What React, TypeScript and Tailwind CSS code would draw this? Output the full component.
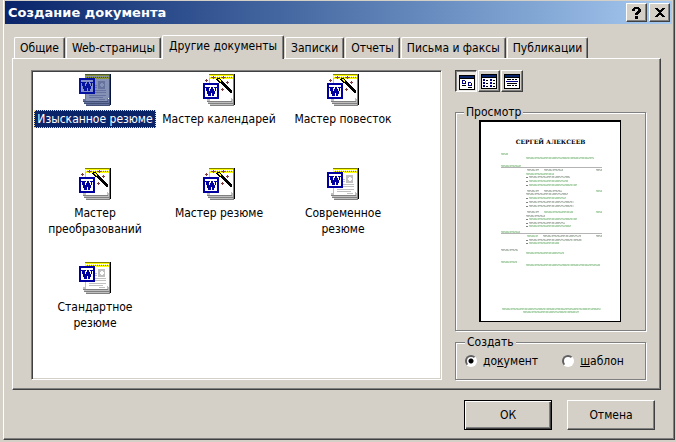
import React, { useState } from 'react';
import clsx from 'clsx';

type Kind = 'wizard' | 'template';

const TABS = [
  'Общие',
  'Web-страницы',
  'Другие документы',
  'Записки',
  'Отчеты',
  'Письма и факсы',
  'Публикации',
];

const ITEMS: { name: string; kind: Kind }[] = [
  { name: 'Изысканное резюме', kind: 'template' },
  { name: 'Мастер календарей', kind: 'wizard' },
  { name: 'Мастер повесток', kind: 'wizard' },
  { name: 'Мастер преобразований', kind: 'wizard' },
  { name: 'Мастер резюме', kind: 'wizard' },
  { name: 'Современное резюме', kind: 'template' },
  { name: 'Стандартное резюме', kind: 'template' },
];

// x, y, width, green
const PREVIEW_LINES: [number, number, number, boolean][] = [
  [20, 31, 7, true],
  [45, 35, 68, true],
  [20, 43, 20, true],
  [46, 47, 12, false], [63, 47, 19, false], [115, 47, 6, false],
  [45, 51, 28, true],
  [48, 54, 41, false],
  [48, 58, 39, true],
  [48, 62, 48, true],
  [46, 68, 12, false], [63, 68, 18, false], [115, 68, 6, true],
  [45, 71, 42, false],
  [48, 75, 37, true],
  [48, 79, 45, false],
  [48, 83, 45, false],
  [46, 89, 12, false], [63, 89, 29, true], [115, 89, 6, true],
  [45, 93, 19, false],
  [48, 96, 48, true],
  [48, 100, 36, false],
  [48, 103, 42, true],
  [20, 109, 19, true],
  [46, 113, 11, true], [62, 113, 38, false], [115, 113, 6, false],
  [48, 117, 53, false],
  [48, 120, 30, true],
  [20, 127, 17, false],
  [45, 130, 38, true],
  [20, 139, 16, true],
  [45, 142, 74, true],
  [21, 186, 99, true],
  [42, 189, 56, true],
];

function DocIcon({ kind, selected }: { kind: Kind; selected: boolean }) {
  const paper = selected ? '#8591b5' : '#ffffff';
  const shade = selected ? '#65739e' : '#c0c0c0';
  const edge = selected ? '#424f77' : '#808080';
  const band = selected ? '#858f35' : '#ffff00';
  const bandDark = selected ? '#485632' : '#808000';
  const dark = selected ? '#05123b' : '#000000';
  const blue = selected ? '#0512a0' : '#0000a0';
  const badge = selected ? '#8591cb' : '#ffffff';
  return (
    <svg width="32" height="32" viewBox="0 0 32 32" shapeRendering="crispEdges" aria-hidden="true">
      <path d="M4 25h27v7H7v-2H5v-2H4z" fill={shade} />
      <path d="M4 27.500h25M5 29.500h25M7 31.500h24" stroke={edge} fill="none" />
      <path d="M6 0h24v24h-2v3H6z" fill={paper} />
      <path d="M28.500 24v3M6.500 1v26" stroke={shade} fill="none" />
      <path d="M6 0h24v4H6z" fill={band} />
      <path d="M6 .5h24" stroke={bandDark} />
      <path d="M7 2.500h23" stroke={paper} strokeDasharray="1 1" />
      <path d="M8 3.500h22" stroke={bandDark} strokeDasharray="1 1" />
      <path d="M7 4.500h23" stroke={band} strokeDasharray="1 1" />
      <path d="M30.500 0v31" stroke={edge} />
      <path d="M31.500 0v31" stroke={dark} />
      {kind === 'template' && (
        <>
          <path d="M19 7h7v8h-7z" fill={shade} />
          <path d="M22 9h2v1h1v2h-1v1h-2v-1h-1v-2h1z" fill={paper} />
          <path d="M16 11.5h2M16 13.5h2M16 16.5h11M16 18.5h11M10 21.5h17M10 23.5h14M20 25.5h6" stroke={shade} />
        </>
      )}
      {kind === 'wizard' && (
        <>
          <path d="M10.500 2v3M9 3.500h3M20.500 2v3M19 3.500h3M3.500 5v3M2 6.500h3M24.500 7v3M23 8.500h3M19.500 14v3M18 15.500h3" stroke="#804040" fill="none" />
          <path d="M14 4h3v1h1v1h1v1h1v1h1v1h1v1h1v1h1v1h1v1h1v1h1v1h1v1h1v3h-2v-1h-1v-1h-1v-1h-1v-1h-1v-1h-1v-1h-1v-1h-1v-1h-1v-1h-1v-1h-1V9h-1V8h-1V7h-1V6h-1z" fill="#000" />
          <path d="M15 5h2v1h1v2h-1V7h-1V6h-1z" fill="#ffff00" />
        </>
      )}
      <svg y={kind === 'wizard' ? 9 : 4} width="16" height="16">
        <path d="M0 0h16v16H0z" fill={blue} />
        <path d="M2 2h12v12H2z" fill={badge} />
        <path d="M3 4h4v1H6v3h1V6h1V4h2v2h1v2h1V5h-1V4h3v1h-1v3h-1v3h-1v2H9v-3H8v3H5v-2H4V8H3V5H2V4z" fill={blue} />
      </svg>
    </svg>
  );
}

function ViewIcon({ view }: { view: number }) {
  return (
    <svg width="16" height="15" viewBox="0 0 16 15" shapeRendering="crispEdges" aria-hidden="true">
      <path d="M0 0h16v15H0z" fill="#000" />
      <path d="M1 4h14v10H1z" fill="#fff" />
      <path d="M1 1h14v2H1z" fill="#0a246a" />
      {view === 0 && (
        <g stroke="#000080" fill="none">
          <path d="M3.500 5.500h2l1 1v2h-3zM9.500 7.500h2l1 1v2h-3z" />
          <path d="M3 10.500h4M9 12.500h4" stroke="#000" />
        </g>
      )}
      {view === 1 && (
        <>
          <path d="M2 5h2v2H2zM2 8h2v2H2zM2 11h2v2H2zM9 5h2v2H9zM9 8h2v2H9zM9 11h2v2H9z" fill="#000080" />
          <path d="M5 6.500h2M5 9.500h2M5 12.500h2M12 6.500h2M12 9.500h2M12 12.500h2" stroke="#000" />
        </>
      )}
      {view === 2 && (
        <>
          <path d="M3 5.500h4M8 5.500h2M11 5.500h2M3 9.500h10M3 11.500h4M8 11.500h2M11 11.500h2" stroke="#000" />
          <path d="M2 7.500h12" stroke="#000080" />
        </>
      )}
    </svg>
  );
}

function Preview() {
  return (
    <div className="relative ml-[23px] h-[202px] w-[142px] border-2 border-r border-b border-black bg-white">
      <svg className="block h-full w-full" viewBox="0 0 139 199" shapeRendering="crispEdges" aria-hidden="true">
        <path d="M20 45.500h101M20 111.500h101" stroke="#b4b4b4" />
        {PREVIEW_LINES.map(([x, y, w, green], i) => (
          <g key={i}>
            <path d={`M${x} ${y + 1}h${w}`} stroke={green ? '#cfe8cf' : '#e0e4e0'} strokeWidth="2" />
            <path d={`M${x} ${y + 0.5}h${w}`} stroke={green ? '#b4d6b4' : '#b8b8b8'} strokeDasharray="4 1 2 2" />
            <path d={`M${x + 1} ${y + 1.5}h${w - 1}`} stroke={green ? '#b4d6b4' : '#bccabc'} strokeDasharray="2 1 4 1 1 2" />
          </g>
        ))}
        <path d="M45 55.500h2M45 59.500h2M45 63.500h2M45 76.500h2M45 80.500h2M45 84.500h2M45 97.500h2M45 101.500h2M45 104.500h2M45 118.500h2M45 121.500h2" stroke="#808080" />
      </svg>
      <p className="absolute inset-x-0 top-4 text-center font-['DejaVu_Serif',serif] text-[6px] leading-2 font-bold whitespace-nowrap">
        СЕРГЕЙ АЛЕКСЕЕВ
      </p>
    </div>
  );
}

const raised =
  'border border-t-white border-l-white border-r-[#404040] border-b-[#404040] bg-[#d4d0c8] shadow-[inset_-1px_-1px_0_#808080]';
const group =
  'min-w-0 border border-[#808080] shadow-[1px_1px_0_#fff,inset_1px_1px_0_#fff]';
const radio =
  "h-3 w-3 appearance-none rounded-full border-2 border-t-[#606060] border-l-[#606060] border-r-white border-b-white bg-white checked:bg-[radial-gradient(circle,#000_2px,#fff_3px)]";

export default function App() {
  const [tab, setTab] = useState(2);
  const [selected, setSelected] = useState(0);
  const [view, setView] = useState(0);
  const [target, setTarget] = useState('document');

  return (
    <div className="min-h-screen bg-[#d4d0c8] pr-px pb-px pl-[3px] font-['DejaVu_Sans_Condensed','DejaVu_Sans',sans-serif] text-[12px] leading-4 text-black">
      <div className="border-r border-b border-l border-l-white border-r-[#404040] border-b-[#404040] px-px pt-px pb-[9px] shadow-[inset_-1px_-1px_0_#808080]">
        <header className="mr-px flex h-[23px] items-center bg-linear-to-r from-[#0a246a] to-[#a6caf0] pr-0.5 pl-[3px]">
          <h1 className="flex-1 font-['DejaVu_Sans',sans-serif] text-[13px] font-bold text-white">Создание документа</h1>
          <button aria-label="Справка" className={clsx(raised, 'mr-0.5 flex h-[19px] w-[21px] items-center justify-center')}>
            <svg width="9" height="12" viewBox="0 0 9 12" shapeRendering="crispEdges" aria-hidden="true">
              <path d="M2 0h5v1h1v1h1v3H8v1H7v1H6v1H3V6h1V5h1V4h1V2H3v2H0V2h1V1h1zM3 9h3v3H3z" />
            </svg>
          </button>
          <button aria-label="Закрыть" className={clsx(raised, 'flex h-[19px] w-[21px] items-center justify-center')}>
            <svg width="10" height="9" viewBox="0 0 10 9" shapeRendering="crispEdges" aria-hidden="true">
              <path d="M0 0h3v1h1v1h2V1h1V0h3v1H9v1H8v1H7v1H6v1h1v1h1v1h1v1h1v1H7V8H6V7H4v1H3v1H0V8h1V7h1V6h1V5h1V4H3V3H2V2H1V1H0z" />
            </svg>
          </button>
        </header>

        <main className="mt-[11px] mr-3 ml-[7px]">
          <div role="tablist" className="flex h-[23px] items-end gap-px pl-0.5">
            {TABS.map((name, i) => (
              <button
                key={name}
                role="tab"
                aria-selected={tab === i}
                onClick={() => setTab(i)}
                className={clsx(
                  'rounded-t-[2px] border-t border-l border-r border-t-white border-l-white border-r-[#404040] bg-[#d4d0c8] whitespace-nowrap shadow-[inset_-1px_0_0_#808080]',
                  tab === i ? 'relative -mb-px h-6 px-1.5 pb-1' : 'h-[21px] px-[5px]',
                )}
              >
                {name}
              </button>
            ))}
          </div>

          <section className="flex gap-[13px] border-t border-r border-b border-l border-t-white border-l-white border-r-[#404040] border-b-[#404040] pt-[11px] pr-3.5 pb-[9px] pl-[18px] shadow-[inset_-1px_-1px_0_#808080]">
            <ul className="grid h-[310px] min-w-0 flex-1 auto-rows-[94px] grid-cols-[repeat(auto-fill,124px)] border border-t-[#808080] border-l-[#808080] border-r-white border-b-white bg-white pt-[3px] pl-px shadow-[inset_1px_1px_0_#404040,inset_-1px_-1px_0_#d4d0c8]">
              {ITEMS.map((item, i) => (
                <li key={item.name}>
                  <button className="flex w-full flex-col items-center" onClick={() => setSelected(i)}>
                    <DocIcon kind={item.kind} selected={selected === i} />
                    <span
                      className={clsx(
                        'mt-1 border border-dotted px-0.5',
                        selected === i ? 'border-[#f5db95] bg-[#0a246a] whitespace-nowrap text-white' : 'border-transparent',
                      )}
                    >
                      {item.name}
                    </span>
                  </button>
                </li>
              ))}
            </ul>

            <div className="flex w-[191px] flex-col">
              <div className="flex gap-px">
                {['Крупные значки', 'Список', 'Таблица'].map((label, i) => (
                  <button
                    key={label}
                    aria-label={label}
                    aria-pressed={view === i}
                    onClick={() => setView(i)}
                    className={clsx(
                      'flex h-[22px] w-[22px] items-center justify-center',
                      view === i
                        ? 'border border-t-[#404040] border-l-[#404040] border-r-white border-b-white bg-[#ebe8e3] pt-0.5 pl-0.5 shadow-[inset_1px_1px_0_#808080]'
                        : raised,
                    )}
                  >
                    <ViewIcon view={i} />
                  </button>
                ))}
              </div>

              <fieldset className={clsx(group, 'mt-3 pb-2')}>
                <legend className="relative z-10 ml-2 bg-[#d4d0c8] px-0.5">Просмотр</legend>
                <Preview />
              </fieldset>

              <fieldset className={clsx(group, 'mt-[3px] flex gap-6 px-[9px] pt-[3px] pb-2.5')}>
                <legend className="bg-[#d4d0c8] px-0.5">Создать</legend>
                <label className="flex items-center gap-1.5">
                  <input
                    type="radio"
                    name="target"
                    className={radio}
                    checked={target === 'document'}
                    onChange={() => setTarget('document')}
                  />
                  <span>до<u>к</u>умент</span>
                </label>
                <label className="flex items-center gap-1.5">
                  <input
                    type="radio"
                    name="target"
                    className={radio}
                    checked={target === 'template'}
                    onChange={() => setTarget('template')}
                  />
                  <span><u>ш</u>аблон</span>
                </label>
              </fieldset>
            </div>
          </section>

          <footer className="mt-2.5 mr-1.5 flex justify-end gap-[15px]">
            <button className="h-[30px] w-[88px] border border-black bg-[#d4d0c8] shadow-[inset_1px_1px_0_#fff,inset_-1px_-1px_0_#404040,inset_-2px_-2px_0_#808080]">
              ОК
            </button>
            <button className={clsx(raised, 'h-[30px] w-[88px]')}>Отмена</button>
          </footer>
        </main>
      </div>
    </div>
  );
}
